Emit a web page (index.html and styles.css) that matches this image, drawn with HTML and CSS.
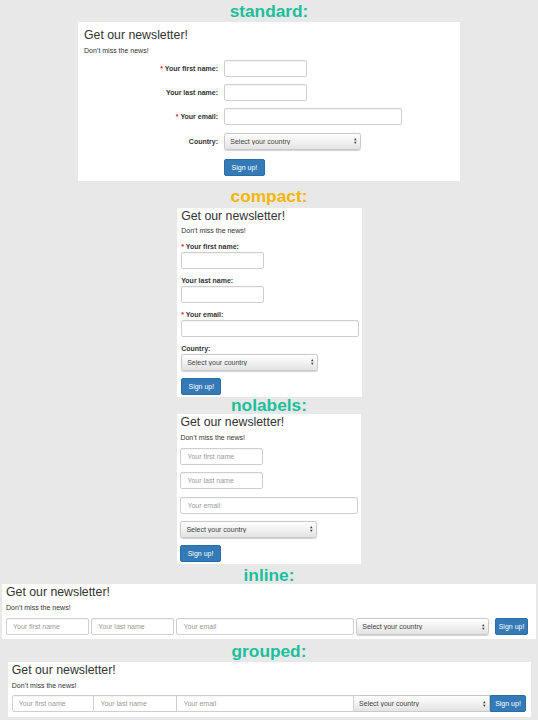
FILE: index.html
```html
<!DOCTYPE html>
<html lang="en">
<head>
<meta charset="utf-8">
<title>Newsletter forms</title>
<link rel="stylesheet" href="styles.css">
</head>
<body>

<section class="demo">
  <h2 class="demo-title demo-title--standard">standard:</h2>
  <div class="card card--standard">
    <h3 class="nl-title">Get our newsletter!</h3>
    <p class="nl-desc nl-desc--standard">Don’t miss the news!</p>
    <form class="form-h">
      <label class="lbl"><span class="req">*</span> Your first name:</label>
      <input class="ctl w-name" type="text">
      <label class="lbl">Your last name:</label>
      <input class="ctl w-name" type="text">
      <label class="lbl"><span class="req">*</span> Your email:</label>
      <input class="ctl w-email" type="text">
      <label class="lbl">Country:</label>
      <span class="sel w-sel">
        <select class="ctl sel-ctl"><option>Select your country</option></select>
        <svg class="sel-arrows" viewBox="0 0 3 7"><path d="M1.5 0 L3 2.6 L0 2.6 Z M1.5 7 L3 4.4 L0 4.4 Z"/></svg>
      </span>
      <button class="btn btn--h" type="button">Sign up!</button>
    </form>
  </div>
</section>

<section class="demo">
  <h2 class="demo-title demo-title--amber demo-title--compact">compact:</h2>
  <div class="card card--compact">
    <h3 class="nl-title">Get our newsletter!</h3>
    <p class="nl-desc nl-desc--compact">Don’t miss the news!</p>
    <form class="form-v">
      <div class="fg">
        <label class="lbl"><span class="req">*</span> Your first name:</label>
        <input class="ctl w-name" type="text">
      </div>
      <div class="fg">
        <label class="lbl">Your last name:</label>
        <input class="ctl w-name" type="text">
      </div>
      <div class="fg">
        <label class="lbl"><span class="req">*</span> Your email:</label>
        <input class="ctl w-email" type="text">
      </div>
      <div class="fg fg--last">
        <label class="lbl">Country:</label>
        <span class="sel w-sel">
          <select class="ctl sel-ctl"><option>Select your country</option></select>
          <svg class="sel-arrows" viewBox="0 0 3 7"><path d="M1.5 0 L3 2.6 L0 2.6 Z M1.5 7 L3 4.4 L0 4.4 Z"/></svg>
        </span>
      </div>
      <button class="btn" type="button">Sign up!</button>
    </form>
  </div>
</section>

<section class="demo">
  <h2 class="demo-title demo-title--nolabels">nolabels:</h2>
  <div class="card card--nolabels">
    <h3 class="nl-title">Get our newsletter!</h3>
    <p class="nl-desc nl-desc--nolabels">Don’t miss the news!</p>
    <form class="form-n">
      <input class="ctl w-name" type="text" placeholder="Your first name">
      <input class="ctl w-name" type="text" placeholder="Your last name">
      <input class="ctl w-email" type="text" placeholder="Your email">
      <span class="sel w-sel">
        <select class="ctl sel-ctl"><option>Select your country</option></select>
        <svg class="sel-arrows" viewBox="0 0 3 7"><path d="M1.5 0 L3 2.6 L0 2.6 Z M1.5 7 L3 4.4 L0 4.4 Z"/></svg>
      </span>
      <button class="btn" type="button">Sign up!</button>
    </form>
  </div>
</section>

<section class="demo">
  <h2 class="demo-title demo-title--inline">inline:</h2>
  <div class="card card--inline">
    <h3 class="nl-title">Get our newsletter!</h3>
    <p class="nl-desc nl-desc--inline">Don’t miss the news!</p>
    <form class="form-i">
      <input class="ctl i-name" type="text" placeholder="Your first name">
      <input class="ctl i-name" type="text" placeholder="Your last name">
      <input class="ctl i-email" type="text" placeholder="Your email">
      <span class="sel i-sel">
        <select class="ctl sel-ctl"><option>Select your country</option></select>
        <svg class="sel-arrows" viewBox="0 0 3 7"><path d="M1.5 0 L3 2.6 L0 2.6 Z M1.5 7 L3 4.4 L0 4.4 Z"/></svg>
      </span>
      <button class="btn btn--inline" type="button">Sign up!</button>
    </form>
  </div>
</section>

<section class="demo">
  <h2 class="demo-title demo-title--grouped">grouped:</h2>
  <div class="card card--grouped">
    <h3 class="nl-title">Get our newsletter!</h3>
    <p class="nl-desc nl-desc--grouped">Don’t miss the news!</p>
    <form class="form-g">
      <input class="ctl g-first" type="text" placeholder="Your first name">
      <input class="ctl g-mid g-last" type="text" placeholder="Your last name">
      <input class="ctl g-mid g-email" type="text" placeholder="Your email">
      <span class="sel g-sel">
        <select class="ctl sel-ctl g-mid"><option>Select your country</option></select>
        <svg class="sel-arrows" viewBox="0 0 3 7"><path d="M1.5 0 L3 2.6 L0 2.6 Z M1.5 7 L3 4.4 L0 4.4 Z"/></svg>
      </span>
      <button class="btn btn--grouped" type="button">Sign up!</button>
    </form>
  </div>
</section>

</body>
</html>
```

FILE: styles.css
```css
html, body {
  margin: 0;
  padding: 0;
  background: #e8e8e8;
}
body {
  font-family: "Liberation Sans", Arial, sans-serif;
  color: #333;
}
.demo {
  display: flow-root;
}

/* section headings */
.demo-title {
  margin: 0;
  font-size: 17.3px;
  line-height: 16px;
  font-weight: 700;
  text-align: center;
  color: #1bbf9c;
}
.demo-title--amber { color: #f7b500; }
.demo-title--standard { margin: 3px 0 3px; }
.demo-title--compact  { margin: 7.3px 0 4px; }
.demo-title--nolabels { margin: 0.6px 0 1px; }
.demo-title--inline   { margin: 2.7px 0 1px; }
.demo-title--grouped  { margin: 3.8px 0 3.2px; }

/* cards */
.card {
  background: #fff;
  box-sizing: border-box;
}
.card--standard { width: 382px; margin: 0 auto; padding: 6.4px 6px 4.7px; }
.card--compact  { width: 185px; margin: 0 auto; padding: 1px 4.7px 1.7px; }
.card--nolabels { width: 184px; margin: 0 auto; padding: 1.1px 3.4px 2px; }
.card--inline   { margin: 0 2px; padding: 1.7px 4px 3.3px; }
.card--grouped  { margin: 0 7.5px; padding: 1.7px 4.3px 4.3px; }

.nl-title {
  margin: 0 0 3.3px;
  font-size: 12.3px;
  line-height: 14px;
  font-weight: 400;
  color: #333;
}
.nl-desc {
  margin: 0;
  font-size: 7px;
  line-height: 10px;
  color: #333;
}
.nl-desc--standard { margin-bottom: 4.3px; }
.nl-desc--compact  { margin-bottom: 6.4px; }
.nl-desc--nolabels { margin-bottom: 5.6px; }
.nl-desc--inline   { margin-bottom: 5.7px; }
.nl-desc--grouped  { margin-bottom: 4.7px; }

/* labels */
.lbl {
  font-size: 7px;
  font-weight: 700;
  color: #333;
}
.req { color: #e4242b; }

/* controls */
.ctl {
  box-sizing: border-box;
  display: block;
  height: 17px;
  margin: 0;
  padding: 0 6px;
  border: 1px solid #cfcfcf;
  border-radius: 2px;
  background: #fff;
  box-shadow: inset 0 0.5px 0.5px rgba(0, 0, 0, 0.075);
  font: 7px "Liberation Sans", Arial, sans-serif;
  color: #555;
  outline: none;
}
.ctl::placeholder { color: #9a9a9a; }

.w-name  { width: 83px; }
.w-email { width: 177.7px; }
.w-sel   { width: 136.7px; }

.sel {
  position: relative;
  display: block;
}
.sel-ctl {
  appearance: none;
  -webkit-appearance: none;
  width: 100%;
  padding: 0 10px 0 5px;
  border: 1px solid #c9c9c9;
  border-radius: 2.5px;
  background: linear-gradient(to bottom, #fefefe 0%, #f3f3f3 45%, #e3e3e3 100%);
  box-shadow: 0 0.5px 1px rgba(0, 0, 0, 0.18);
  color: #444;
}
.sel-arrows {
  position: absolute;
  right: 4px;
  top: 5.5px;
  width: 2.6px;
  height: 6px;
  fill: #444;
  pointer-events: none;
}

/* button */
.btn {
  box-sizing: border-box;
  display: block;
  height: 17px;
  margin: 0;
  padding: 0 6.3px;
  background: #337ab7;
  border: 1px solid #2e6da4;
  border-radius: 2px;
  color: #fff;
  font: 7px "Liberation Sans", Arial, sans-serif;
  line-height: 15px;
  text-align: center;
}

/* standard: horizontal */
.form-h {
  display: grid;
  grid-template-columns: 134px auto;
  column-gap: 6.3px;
  row-gap: 7.2px;
  align-items: center;
  justify-items: start;
  margin: 0;
}
.form-h .lbl {
  justify-self: end;
  line-height: 17px;
}
.btn--h {
  grid-column: 2;
  margin-top: 2.2px;
}

/* compact: stacked */
.form-v { margin: 0; }
.fg {
  display: flex;
  flex-direction: column;
  align-items: flex-start;
  margin-bottom: 7.7px;
}
.fg--last { margin-bottom: 7px; }
.fg .lbl {
  line-height: 8px;
  margin-bottom: 1.3px;
}

/* nolabels */
.form-n {
  display: flex;
  flex-direction: column;
  align-items: flex-start;
  gap: 7.25px;
  margin: 0;
}

/* inline */
.form-i {
  display: flex;
  align-items: center;
  gap: 2.55px;
  margin: 0;
}
.i-name  { width: 82.7px; }
.i-email { width: 177.3px; }
.i-sel   { width: 132.7px; }
.btn--inline {
  width: 33px;
  padding: 0;
  margin-left: 3.5px;
}

/* grouped */
.form-g {
  display: flex;
  margin: 0;
}
.form-g .ctl,
.form-g .sel-ctl {
  border-radius: 0;
}
.g-first {
  width: 82.6px;
  border-radius: 2px 0 0 2px !important;
}
.form-g .g-mid { border-left: none; }
.g-last  { width: 83px; }
.g-email { width: 176.7px; }
.g-sel   { width: 135.7px; }
.form-g .sel-ctl { box-shadow: none; }
.btn--grouped {
  flex: 1;
  padding: 0;
  border-radius: 0 2px 2px 0;
}
```
